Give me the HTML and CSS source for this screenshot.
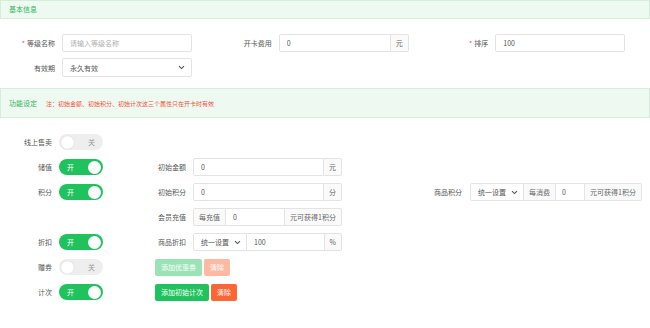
FILE: index.html
```html
<!DOCTYPE html>
<html lang="zh-CN">
<head>
    <meta charset="UTF-8">
    <title>会员等级</title>
    <link rel="stylesheet" href="styles.css">
</head>
<body>

    <div class="section-title">基本信息</div>

    <div class="base-form">
        <div class="form-row">
            <div class="field">
                <label class="field-label"><span class="req">*</span>等级名称</label>
                <input class="text-input" type="text" placeholder="请输入等级名称">
            </div>
            <div class="field">
                <label class="field-label">开卡费用</label>
                <div class="input-group">
                    <input class="text-input" type="text" value="0">
                    <span class="addon">元</span>
                </div>
            </div>
            <div class="field">
                <label class="field-label"><span class="req">*</span>排序</label>
                <input class="text-input" type="text" value="100">
            </div>
        </div>
        <div class="form-row">
            <div class="field">
                <label class="field-label">有效期</label>
                <div class="select">
                    <span>永久有效</span>
                    <svg width="7" height="5" viewBox="0 0 7 5"><path d="M1 1.2 L3.5 3.6 L6 1.2" fill="none" stroke="#555" stroke-width="1.1"/></svg>
                </div>
            </div>
        </div>
    </div>

    <div class="section-title tall">功能设定<span class="note">注：初始金额、初始积分、初始计次这三个属性只在开卡时有效</span></div>

    <div class="options">
        <div class="opt-row">
            <span class="opt-label">线上售卖</span>
            <span class="switch off"><i class="knob"></i><em>关</em></span>
        </div>

        <div class="opt-row">
            <span class="opt-label">储值</span>
            <span class="switch"><em>开</em><i class="knob"></i></span>
            <div class="sub">
                <span class="sub-label">初始金额</span>
                <div class="input-group wide">
                    <input class="text-input" type="text" value="0">
                    <span class="addon">元</span>
                </div>
            </div>
        </div>

        <div class="opt-row">
            <span class="opt-label">积分</span>
            <span class="switch"><em>开</em><i class="knob"></i></span>
            <div class="sub">
                <span class="sub-label">初始积分</span>
                <div class="input-group wide">
                    <input class="text-input" type="text" value="0">
                    <span class="addon">分</span>
                </div>
            </div>
            <div class="extra">
                <span class="extra-label">商品积分</span>
                <div class="input-group goods">
                    <div class="select mini">
                        <span>统一设置</span>
                        <svg width="7" height="5" viewBox="0 0 7 5"><path d="M1 1.2 L3.5 3.6 L6 1.2" fill="none" stroke="#555" stroke-width="1.1"/></svg>
                    </div>
                    <span class="addon">每消费</span>
                    <input class="text-input short" type="text" value="0">
                    <span class="addon">元可获得1积分</span>
                </div>
            </div>
        </div>

        <div class="opt-row">
            <span class="opt-label"></span>
            <span class="switch-slot"></span>
            <div class="sub">
                <span class="sub-label">会员充值</span>
                <div class="input-group wide">
                    <span class="addon">每充值</span>
                    <input class="text-input" type="text" value="0">
                    <span class="addon">元可获得1积分</span>
                </div>
            </div>
        </div>

        <div class="opt-row">
            <span class="opt-label">折扣</span>
            <span class="switch"><em>开</em><i class="knob"></i></span>
            <div class="sub">
                <span class="sub-label">商品折扣</span>
                <div class="input-group wide">
                    <div class="select mini">
                        <span>统一设置</span>
                        <svg width="7" height="5" viewBox="0 0 7 5"><path d="M1 1.2 L3.5 3.6 L6 1.2" fill="none" stroke="#555" stroke-width="1.1"/></svg>
                    </div>
                    <input class="text-input" type="text" value="100">
                    <span class="addon">%</span>
                </div>
            </div>
        </div>

        <div class="opt-row">
            <span class="opt-label">赠券</span>
            <span class="switch off"><i class="knob"></i><em>关</em></span>
            <div class="btns">
                <button class="btn green" disabled>添加优惠劵</button>
                <button class="btn orange" disabled>清除</button>
            </div>
        </div>

        <div class="opt-row">
            <span class="opt-label">计次</span>
            <span class="switch"><em>开</em><i class="knob"></i></span>
            <div class="btns">
                <button class="btn green">添加初始计次</button>
                <button class="btn orange">清除</button>
            </div>
        </div>
    </div>

</body>
</html>
```

FILE: styles.css
```css
body {
    margin: 0;
    padding: 0;
    background-color: #fff;
    color: #555;
    font-family: "Noto Sans CJK SC", "Noto Sans", sans-serif;
    font-size: 7px;
}

input, button {
    font-family: inherit;
    font-size: inherit;
}


.section-title {
    height: 17px;
    line-height: 17px;
    padding-left: 8px;
    background-color: #eefaf1;
    border: 1px solid #d3eed9;
    color: #33b35c;
}

.section-title.tall {
    height: 28px;
    line-height: 28px;
    margin-top: 11px;
}

.section-title .note {
    margin-left: 9px;
    color: #f2503c;
    font-size: 6px;
}


.base-form {
    padding-top: 15px;
}

.form-row {
    display: flex;
    margin-bottom: 6px;
}

.field {
    display: flex;
    align-items: center;
    width: 218px;
}

.field-label {
    width: 55px;
    margin-right: 7px;
    text-align: right;
}

.req {
    color: #f0503c;
    margin-right: 2px;
}

.text-input {
    box-sizing: border-box;
    width: 130px;
    height: 18px;
    padding: 0 7px;
    border: 1px solid #e3e3e3;
    border-radius: 2px;
    color: #555;
    outline: none;
}

.text-input::placeholder {
    color: #b0b0b0;
}


.input-group {
    display: flex;
    width: 130px;
    height: 18px;
}

.input-group .text-input {
    flex: 1;
    width: auto;
    min-width: 0;
    border-radius: 0;
}

.input-group > :first-child {
    border-radius: 2px 0 0 2px;
}

.input-group > :last-child {
    border-radius: 0 2px 2px 0;
}

.input-group > * + * {
    border-left: none !important;
}

.addon {
    box-sizing: border-box;
    display: flex;
    flex-shrink: 0;
    align-items: center;
    padding: 0 5px;
    height: 18px;
    border: 1px solid #e3e3e3;
    background-color: #fafafa;
    color: #666;
    white-space: nowrap;
}

.input-group.wide {
    width: 149px;
}

.input-group.goods {
    width: 172px;
}

.text-input.short {
    flex: 1 1 28px;
    padding: 0 6px;
}


.select {
    box-sizing: border-box;
    display: flex;
    align-items: center;
    justify-content: space-between;
    width: 130px;
    height: 19px;
    padding: 0 6px 0 7px;
    border: 1px solid #e3e3e3;
    border-radius: 2px;
    white-space: nowrap;
}

.select.mini {
    flex: 0 0 54px;
    width: 54px;
    height: 18px;
    padding: 0 5px 0 7px;
}


.options {
    padding-top: 15px;
}

.opt-row {
    display: flex;
    align-items: center;
    height: 18px;
    margin-bottom: 7px;
}

.opt-label {
    width: 52px;
    margin-right: 7px;
    text-align: right;
}

.switch,
.switch-slot {
    box-sizing: border-box;
    display: flex;
    align-items: center;
    justify-content: space-between;
    width: 44px;
    height: 16px;
    padding: 0 2px 0 8px;
    border-radius: 8px;
}

.switch {
    background-color: #1fc25c;
    color: #fff;
}

.switch em {
    font-style: normal;
}

.switch .knob {
    width: 13px;
    height: 13px;
    border-radius: 50%;
    background-color: #fff;
}

.switch.off {
    padding: 0 8px 0 2px;
    background-color: #eee;
    color: #999;
}

.switch.off .knob {
    box-shadow: 0 0 1px rgba(0, 0, 0, 0.2);
}


.sub {
    display: flex;
    align-items: center;
    margin-left: 52px;
}

.sub-label {
    width: 31px;
    margin-right: 7px;
    text-align: right;
}

.extra {
    display: flex;
    align-items: center;
}

.extra-label {
    width: 120px;
    margin-right: 8px;
    text-align: right;
}


.btns {
    display: flex;
    gap: 2px;
    margin-left: 52px;
}

.btn {
    height: 17px;
    padding: 0 6px;
    border: none;
    border-radius: 2px;
    color: #fff;
    cursor: pointer;
}

.btn.green {
    background-color: #1fc25c;
}

.btn.orange {
    background-color: #fd6634;
}

.btn:disabled {
    opacity: 0.45;
    cursor: default;
}
```
